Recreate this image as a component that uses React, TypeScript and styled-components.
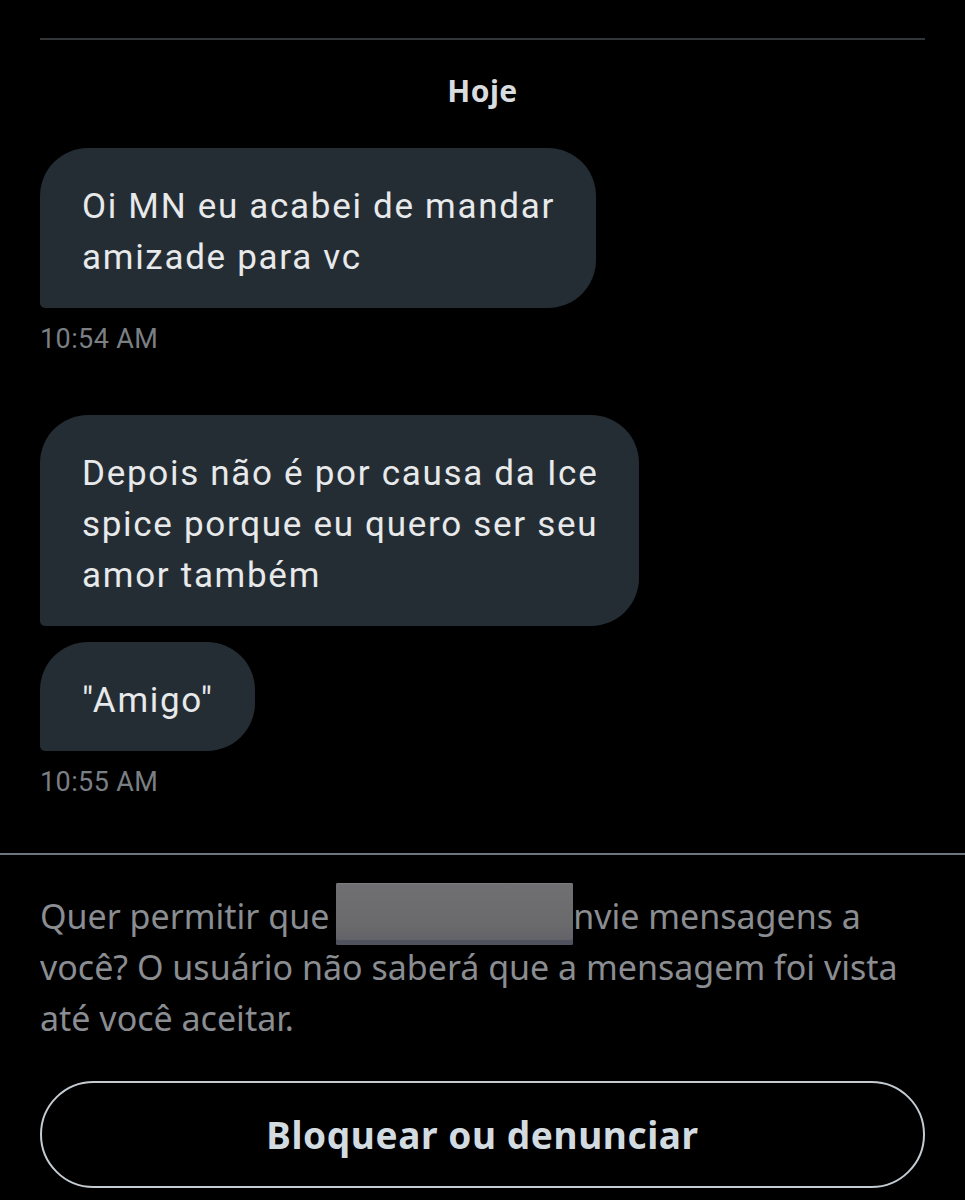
import React from "react";
import styled, { createGlobalStyle } from "styled-components";

const GlobalStyle = createGlobalStyle`
  html, body { margin: 0; padding: 0; background: #000000; }
  body { font-family: Roboto, "Noto Sans", sans-serif; -webkit-font-smoothing: antialiased; }
`;

const Page = styled.div`
  width: 965px;
  min-height: 1200px;
  background: #000000;
  display: flex;
  flex-direction: column;
`;

const Thread = styled.section`
  display: flex;
  flex-direction: column;
  align-items: flex-start;
  padding: 38px 40px 55px;
`;

const TopRule = styled.div`
  align-self: stretch;
  height: 2px;
  background: #333639;
`;

const DayLabel = styled.div`
  align-self: stretch;
  margin-top: 33px;
  margin-bottom: 39px;
  text-align: center;
  font-family: "Noto Sans", sans-serif;
  font-weight: 700;
  font-size: 30px;
  letter-spacing: 0.5px;
  line-height: 36px;
  color: #d9dcde;
`;

const Bubble = styled.div<{ $gapTop?: number }>`
  margin-top: ${(p) => p.$gapTop ?? 0}px;
  background: #252d34;
  color: #e7e9ea;
  font-family: Roboto, sans-serif;
  font-size: 35px;
  letter-spacing: 1.7px;
  line-height: 51px;
  padding: 33px 41px 25px 42px;
  border-radius: 48px 48px 48px 5px;
  white-space: pre;
`;

const Time = styled.div`
  margin-top: 15px;
  font-family: Roboto, sans-serif;
  font-size: 27px;
  letter-spacing: 0.4px;
  line-height: 32px;
  color: #7a7f84;
`;

const Divider = styled.div`
  height: 2px;
  background: #6e767d;
`;

const Footer = styled.section`
  display: flex;
  flex-direction: column;
  padding: 36px 40px 0;
`;

const Notice = styled.p`
  margin: 0;
  font-family: "Noto Sans", sans-serif;
  font-size: 34px;
  line-height: 51px;
  color: #8a8d91;
  white-space: pre;
`;

const Redaction = styled.span`
  display: inline-block;
  vertical-align: top;
  width: 237px;
  height: 62px;
  margin: -8px 0 -3px -2px;
  border-radius: 2px;
  background: linear-gradient(180deg, #707072 0%, #6a6a6c 70%, #5f6066 100%);
  box-shadow: inset 0 -5px 0 #50535d, inset 0 1px 0 #7c7c7e;
`;

const OutlineButton = styled.button`
  margin-top: 37px;
  height: 107px;
  border: 2px solid #c4ccd2;
  border-radius: 999px;
  background: transparent;
  color: #d2dbe0;
  font-family: "Noto Sans", sans-serif;
  font-weight: 700;
  font-size: 37px;
  letter-spacing: 0.6px;
  cursor: pointer;
  display: flex;
  align-items: center;
  justify-content: center;
`;

export default function App() {
  return (
    <Page>
      <GlobalStyle />
      <Thread>
        <TopRule />
        <DayLabel>Hoje</DayLabel>
        <Bubble>{"Oi MN eu acabei de mandar\namizade para vc"}</Bubble>
        <Time>10:54 AM</Time>
        <Bubble $gapTop={60}>
          {"Depois não é por causa da Ice\nspice porque eu quero ser seu\namor também"}
        </Bubble>
        <Bubble $gapTop={16}>{'"Amigo"'}</Bubble>
        <Time>10:55 AM</Time>
      </Thread>
      <Divider />
      <Footer>
        <Notice>
          {"Quer permitir que "}
          <Redaction aria-hidden="true" />
          {"nvie mensagens a\nvocê? O usuário não saberá que a mensagem foi vista\naté você aceitar."}
        </Notice>
        <OutlineButton>Bloquear ou denunciar</OutlineButton>
      </Footer>
    </Page>
  );
}
